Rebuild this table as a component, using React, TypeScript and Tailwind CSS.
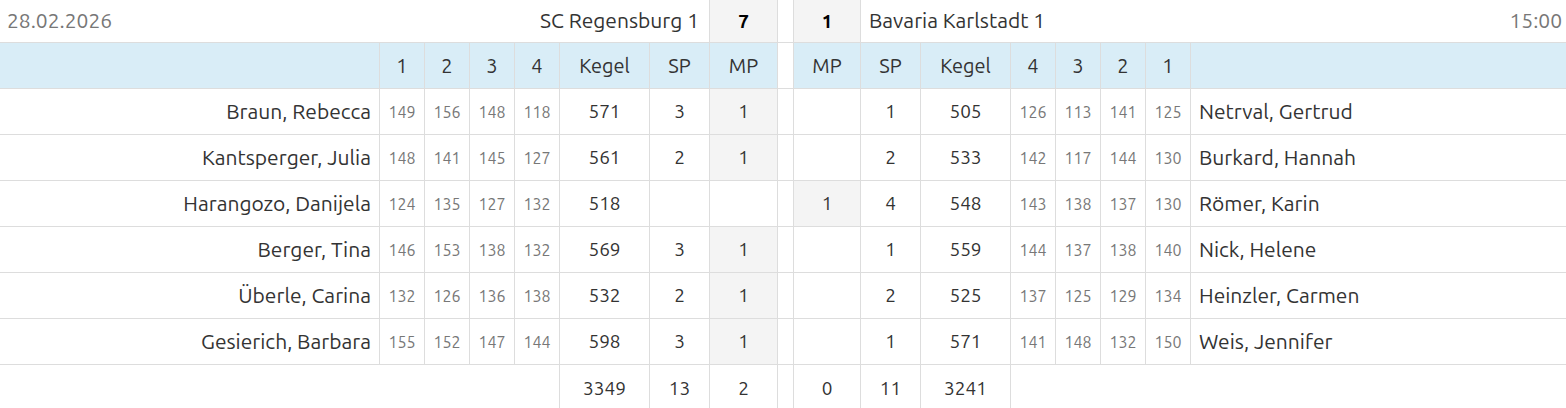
import React from "react";

type Row = {
  hn: string; h: number[]; hk: number; hsp: string; hmp: string;
  amp: string; asp: string; ak: number; a: number[]; an: string;
};

const rows: Row[] = [
  { hn: "Braun, Rebecca", h: [149, 156, 148, 118], hk: 571, hsp: "3", hmp: "1", amp: "", asp: "1", ak: 505, a: [126, 113, 141, 125], an: "Netrval, Gertrud" },
  { hn: "Kantsperger, Julia", h: [148, 141, 145, 127], hk: 561, hsp: "2", hmp: "1", amp: "", asp: "2", ak: 533, a: [142, 117, 144, 130], an: "Burkard, Hannah" },
  { hn: "Harangozo, Danijela", h: [124, 135, 127, 132], hk: 518, hsp: "", hmp: "", amp: "1", asp: "4", ak: 548, a: [143, 138, 137, 130], an: "Römer, Karin" },
  { hn: "Berger, Tina", h: [146, 153, 138, 132], hk: 569, hsp: "3", hmp: "1", amp: "", asp: "1", ak: 559, a: [144, 137, 138, 140], an: "Nick, Helene" },
  { hn: "Überle, Carina", h: [132, 126, 136, 138], hk: 532, hsp: "2", hmp: "1", amp: "", asp: "2", ak: 525, a: [137, 125, 129, 134], an: "Heinzler, Carmen" },
  { hn: "Gesierich, Barbara", h: [155, 152, 147, 144], hk: 598, hsp: "3", hmp: "1", amp: "", asp: "1", ak: 571, a: [141, 148, 132, 150], an: "Weis, Jennifer" },
];

const B = "border-r border-[#dddddd]";
const cell = "flex items-center justify-center border-b border-[#dddddd] text-[19px]";
const nameCell = "flex items-center border-b border-[#dddddd] text-[21px]";

function Small({ v }: { v: number }) {
  return <div className={`flex items-center justify-center border-b border-[#dddddd] ${B} text-[16px] text-[#777777]`}>{v}</div>;
}

export default function App() {
  return (
    <div
      className="w-[1566px] h-[408px] overflow-hidden bg-white text-[#333333]"
      style={{ fontFamily: "Ubuntu, 'Open Sans', 'Noto Sans', sans-serif" }}
    >
      <div className="grid grid-cols-[380px_45px_45px_45px_45px_90px_60px_68px_16px_67px_60px_90px_45px_45px_45px_45px_375px] auto-rows-[46px] grid-rows-[43px]">
        {/* Row 0 */}
        <div className={`col-span-7 ${nameCell} justify-between ${B} pl-[7px] pr-[10px]`}>
          <span className="text-[#777777]">28.02.2026</span>
          <span>SC Regensburg 1</span>
        </div>
        <div className={`${cell} ${B} bg-[#f4f4f4] font-bold text-black`}>7</div>
        <div className={`${cell} ${B}`}></div>
        <div className={`${cell} ${B} bg-[#f4f4f4] font-bold text-black`}>1</div>
        <div className={`col-span-7 ${nameCell} justify-between pl-[8px] pr-[4px]`}>
          <span>Bavaria Karlstadt 1</span>
          <span className="text-[#777777]">15:00</span>
        </div>

        {/* Header */}
        <div className={`${cell} ${B} bg-[#d9edf7]`}></div>
        {["1", "2", "3", "4", "Kegel", "SP", "MP"].map((t, i) => (
          <div key={"hh" + i} className={`${cell} ${B} bg-[#d9edf7] text-[20px]`}>{t}</div>
        ))}
        <div className={`${cell} ${B}`}></div>
        {["MP", "SP", "Kegel", "4", "3", "2", "1"].map((t, i) => (
          <div key={"ha" + i} className={`${cell} ${B} bg-[#d9edf7] text-[20px]`}>{t}</div>
        ))}
        <div className={`${cell} bg-[#d9edf7]`}></div>

        {/* Body */}
        {rows.map((r, ri) => (
          <React.Fragment key={ri}>
            <div className={`${nameCell} justify-end ${B} pr-[8px]`}>{r.hn}</div>
            {r.h.map((v, i) => <Small key={"h" + i} v={v} />)}
            <div className={`${cell} ${B}`}>{r.hk}</div>
            <div className={`${cell} ${B}`}>{r.hsp}</div>
            <div className={`${cell} ${B} ${r.hmp ? "bg-[#f4f4f4]" : ""}`}>{r.hmp}</div>
            <div className={`${cell} ${B}`}></div>
            <div className={`${cell} ${B} ${r.amp ? "bg-[#f4f4f4]" : ""}`}>{r.amp}</div>
            <div className={`${cell} ${B}`}>{r.asp}</div>
            <div className={`${cell} ${B}`}>{r.ak}</div>
            {r.a.map((v, i) => <Small key={"a" + i} v={v} />)}
            <div className={`${nameCell} justify-start pl-[8px]`}>{r.an}</div>
          </React.Fragment>
        ))}

        {/* Totals */}
        <div className={`col-span-5 ${B}`}></div>
        <div className={`flex items-center justify-center text-[19px] ${B}`}>3349</div>
        <div className={`flex items-center justify-center text-[19px] ${B}`}>13</div>
        <div className={`flex items-center justify-center text-[19px] ${B}`}>2</div>
        <div className={`${B}`}></div>
        <div className={`flex items-center justify-center text-[19px] ${B}`}>0</div>
        <div className={`flex items-center justify-center text-[19px] ${B}`}>11</div>
        <div className={`flex items-center justify-center text-[19px] ${B}`}>3241</div>
        <div className="col-span-5"></div>
      </div>
    </div>
  );
}
